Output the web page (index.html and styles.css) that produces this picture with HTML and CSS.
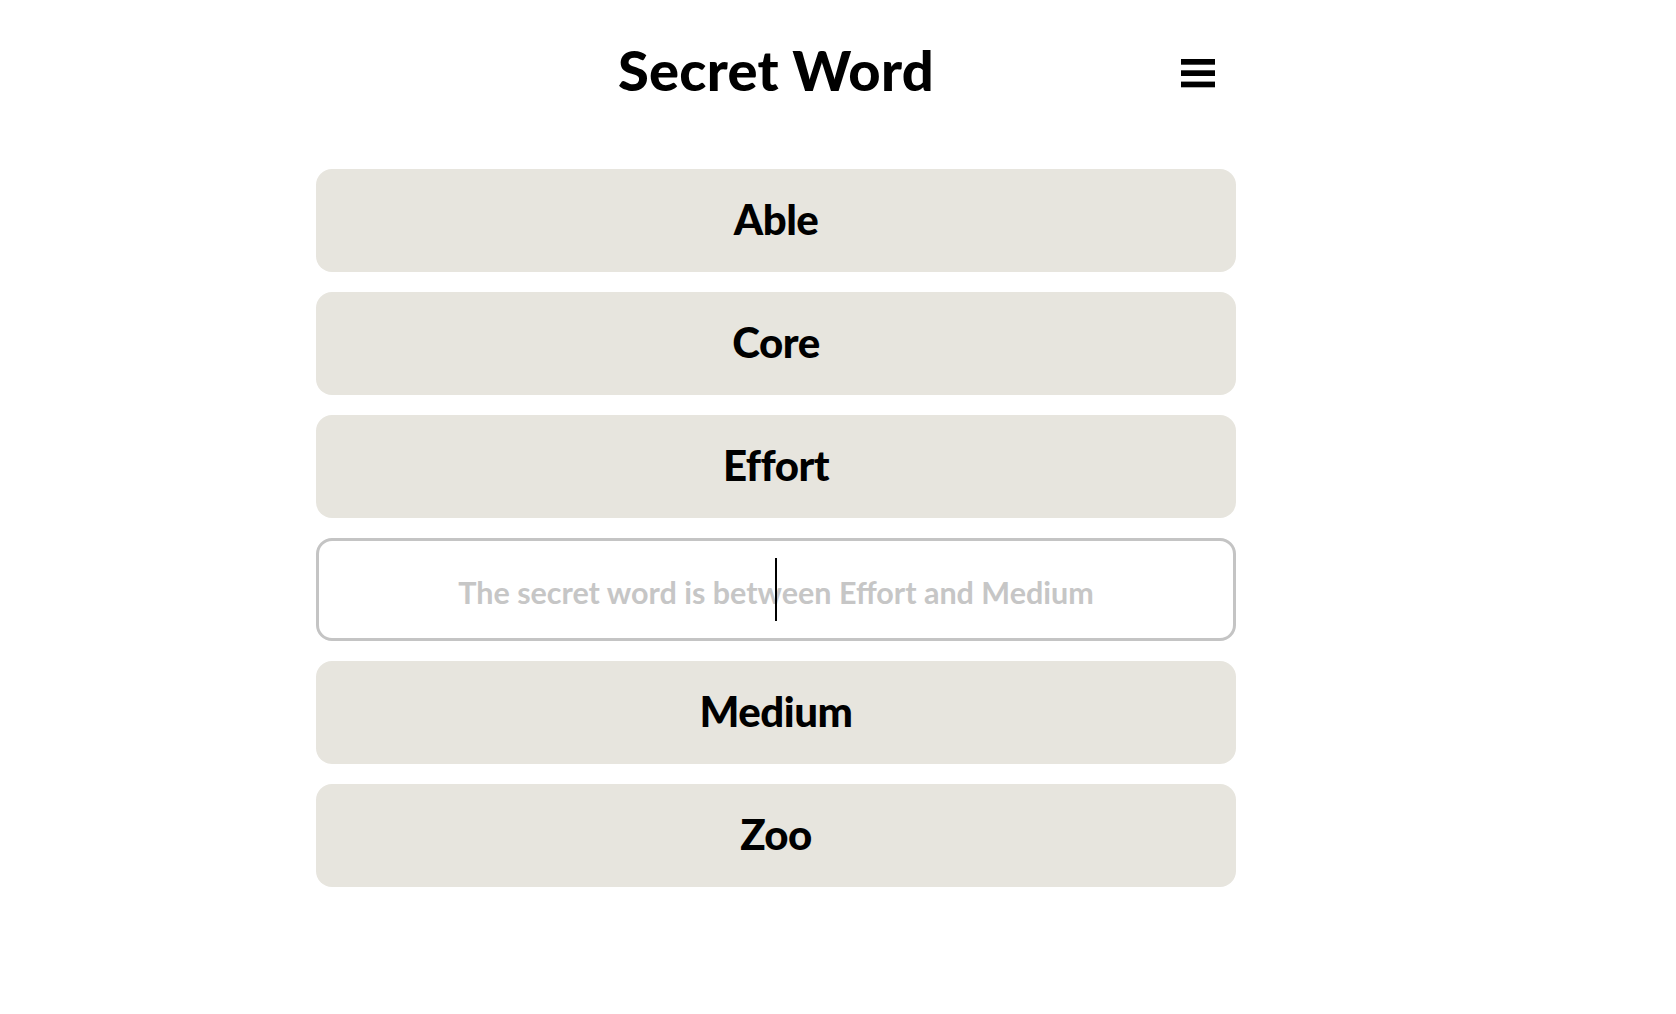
FILE: index.html
```html
<!DOCTYPE html>
<html lang="en">
<head>
<meta charset="utf-8">
<title>Secret Word</title>
<link rel="stylesheet" href="styles.css">
</head>
<body>
<div class="app">
  <header class="header">
    <div class="spacer"></div>
    <h1 class="title">Secret Word</h1>
    <button class="menu" aria-label="Menu">
      <svg width="34" height="29" viewBox="0 0 34 29"><rect x="0" y="0" width="34" height="5.7" fill="#000"/><rect x="0" y="11.3" width="34" height="5.7" fill="#000"/><rect x="0" y="22.6" width="34" height="5.7" fill="#000"/></svg>
    </button>
  </header>
  <main class="list">
    <div class="word">Able</div>
    <div class="word">Core</div>
    <div class="word">Effort</div>
    <div class="guess">
      <input class="guess-input" type="text" placeholder="The secret word is between Effort and Medium">
      <span class="caret"></span>
    </div>
    <div class="word">Medium</div>
    <div class="word">Zoo</div>
  </main>
</div>
</body>
</html>
```
FILE: styles.css
```css
html, body {
  margin: 0;
  padding: 0;
  background: #ffffff;
}
body {
  font-family: Lato, "Open Sans", sans-serif;
  color: #000;
}
.app {
  width: 920px;
  margin-left: 316px;
}
.header {
  display: grid;
  grid-template-columns: 1fr auto 1fr;
  align-items: center;
  padding-top: 37px;
  margin-bottom: 66px;
}
.title {
  margin: 0;
  font-size: 56px;
  line-height: 66px;
  font-weight: 900;
  letter-spacing: 0.3px;
}
.menu {
  justify-self: end;
  margin-right: 21px;
  margin-top: 7px;
  padding: 0;
  border: 0;
  background: none;
  display: flex;
}
.list {
  display: flex;
  flex-direction: column;
  gap: 20px;
}
.word {
  box-sizing: border-box;
  height: 103px;
  padding-bottom: 4px;
  border-radius: 16px;
  background: #e7e5de;
  display: flex;
  align-items: center;
  justify-content: center;
  font-size: 42px;
  font-weight: 900;
  letter-spacing: -0.5px;
}
.guess {
  position: relative;
  height: 103px;
}
.guess-input {
  box-sizing: border-box;
  width: 100%;
  height: 100%;
  margin: 0;
  padding: 4px 0 0;
  border: 3px solid #c4c4c4;
  border-radius: 16px;
  outline: none;
  background: #fff;
  text-align: center;
  font-family: Lato, "Open Sans", sans-serif;
  font-size: 30px;
  font-weight: 700;
  caret-color: transparent;
}
.guess-input::placeholder {
  color: #c6c6c6;
  font-size: 30.5px;
  font-weight: 700;
  opacity: 1;
}
.caret {
  position: absolute;
  left: 459px;
  top: 20px;
  width: 2px;
  height: 63px;
  background: #000;
}
```
